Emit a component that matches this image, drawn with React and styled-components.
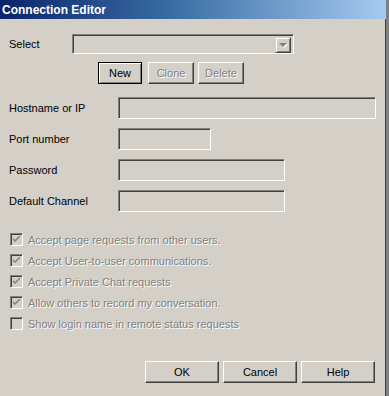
import React from 'react';
import styled, { createGlobalStyle, css } from 'styled-components';

const FACE = '#d4d0c8';
const SHADOW = '#808080';
const DARK = '#404040';
const LIGHT = '#ffffff';

const Global = createGlobalStyle`
  html, body {
    margin: 0;
    padding: 0;
    background: ${FACE};
  }
  body {
    font-family: "Liberation Sans", Arial, sans-serif;
    font-size: 11px;
    color: #000;
  }
`;

const Window = styled.div`
  width: 389px;
  height: 396px;
  box-sizing: border-box;
  background: ${FACE};
  border-right: 3px solid ${SHADOW};
  box-shadow: inset -1px 0 ${DARK};
  display: flex;
  flex-direction: column;
  overflow: hidden;
`;

const TitleBar = styled.div`
  height: 19px;
  flex-shrink: 0;
  display: flex;
  align-items: center;
  padding-left: 2px;
  background: linear-gradient(to right, #0a246a 0%, #3a6ea5 45%, #a6caf0 100%);
  color: #fff;
  font-family: "Liberation Sans", Arial, sans-serif;
  font-weight: bold;
  font-size: 12px;
`;

const Body = styled.div`
  flex: 1;
  display: flex;
  flex-direction: column;
  padding: 15px 0 0 9px;
`;

const SelectRow = styled.div`
  display: flex;
  align-items: center;
  height: 20px;
`;

const Label = styled.span`
  width: ${p => p.$width || 109}px;
  flex-shrink: 0;
`;

const sunken = css`
  box-sizing: border-box;
  background: ${FACE};
  border-style: solid;
  border-width: 1px;
  border-color: ${SHADOW} ${LIGHT} ${LIGHT} ${SHADOW};
  box-shadow: inset 1px 1px ${DARK}, inset -1px -1px ${FACE};
`;

const Combo = styled.div`
  ${sunken};
  width: 222px;
  height: 20px;
  display: flex;
  justify-content: flex-end;
  padding: 2px;
`;

const ComboButton = styled.div`
  width: 16px;
  height: 16px;
  box-sizing: border-box;
  background: ${FACE};
  border-style: solid;
  border-width: 1px;
  border-color: ${FACE} ${DARK} ${DARK} ${FACE};
  box-shadow: inset 1px 1px ${LIGHT}, inset -1px -1px ${SHADOW};
  display: flex;
  align-items: center;
  justify-content: center;
`;

const Arrow = styled.div`
  width: 0;
  height: 0;
  border-left: 4px solid transparent;
  border-right: 4px solid transparent;
  border-top: 4px solid ${SHADOW};
  filter: drop-shadow(1px 1px 0 ${LIGHT});
`;

const ButtonRow = styled.div`
  display: flex;
  margin: 8px 0 0 89px;
  gap: ${p => p.$gap || 4}px;
`;

const Button = styled.div`
  box-sizing: border-box;
  width: ${p => p.$width}px;
  height: 22px;
  display: flex;
  align-items: center;
  justify-content: center;
  background: ${FACE};
  border-style: solid;
  border-width: 1px;
  border-color: ${LIGHT} ${DARK} ${DARK} ${LIGHT};
  box-shadow: inset -1px -1px ${SHADOW};
  color: ${p => (p.$disabled ? SHADOW : '#000')};
  text-shadow: ${p => (p.$disabled ? `1px 1px 0 ${LIGHT}` : 'none')};
  ${p =>
    p.$default &&
    css`
      border: 1px solid #000;
      box-shadow: inset 1px 1px ${LIGHT}, inset -1px -1px ${SHADOW};
    `}
`;

const Fields = styled.div`
  display: grid;
  grid-template-columns: 109px auto;
  row-gap: 9px;
  margin-top: 13px;
  align-items: center;
`;

const Field = styled.div`
  ${sunken};
  width: ${p => p.$width}px;
  height: 22px;
`;

const Checks = styled.div`
  display: flex;
  flex-direction: column;
  gap: 8px;
  margin-top: 21px;
  padding-left: 1px;
`;

const CheckRow = styled.div`
  display: flex;
  align-items: center;
  height: 13px;
  gap: 5px;
  color: ${SHADOW};
  text-shadow: 1px 1px 0 ${LIGHT};
`;

const Box = styled.div`
  ${sunken};
  width: 13px;
  height: 13px;
  display: flex;
  align-items: center;
  justify-content: center;
`;

const Footer = styled.div`
  display: flex;
  gap: 4px;
  margin-top: auto;
  margin-bottom: 13px;
  padding-left: 136px;
`;

const Check = () => (
  <svg width="7" height="7" viewBox="0 0 7 7">
    <path d="M0 2 L0 4 L2 6 L7 1 L7 -1 L2 4 Z" fill={SHADOW} />
  </svg>
);

const options = [
  { label: 'Accept page requests from other users.', checked: true },
  { label: 'Accept User-to-user communications.', checked: true },
  { label: 'Accept Private Chat requests', checked: true },
  { label: 'Allow others to record my conversation.', checked: true },
  { label: 'Show login name in remote status requests', checked: false },
];

const fields = [
  { label: 'Hostname or IP', width: 258 },
  { label: 'Port number', width: 93 },
  { label: 'Password', width: 167 },
  { label: 'Default Channel', width: 167 },
];

export default function App() {
  return (
    <Window>
      <Global />
      <TitleBar>Connection Editor</TitleBar>
      <Body>
        <SelectRow>
          <Label $width={63}>Select</Label>
          <Combo>
            <ComboButton>
              <Arrow />
            </ComboButton>
          </Combo>
        </SelectRow>
        <ButtonRow>
          <Button $width={44} $default>New</Button>
          <Button $width={46} $disabled style={{ marginLeft: 2 }}>Clone</Button>
          <Button $width={46} $disabled>Delete</Button>
        </ButtonRow>
        <Fields>
          {fields.map(f => (
            <React.Fragment key={f.label}>
              <Label>{f.label}</Label>
              <Field $width={f.width} />
            </React.Fragment>
          ))}
        </Fields>
        <Checks>
          {options.map(o => (
            <CheckRow key={o.label}>
              <Box>{o.checked && <Check />}</Box>
              <span>{o.label}</span>
            </CheckRow>
          ))}
        </Checks>
        <Footer>
          <Button $width={74}>OK</Button>
          <Button $width={74}>Cancel</Button>
          <Button $width={74}>Help</Button>
        </Footer>
      </Body>
    </Window>
  );
}
